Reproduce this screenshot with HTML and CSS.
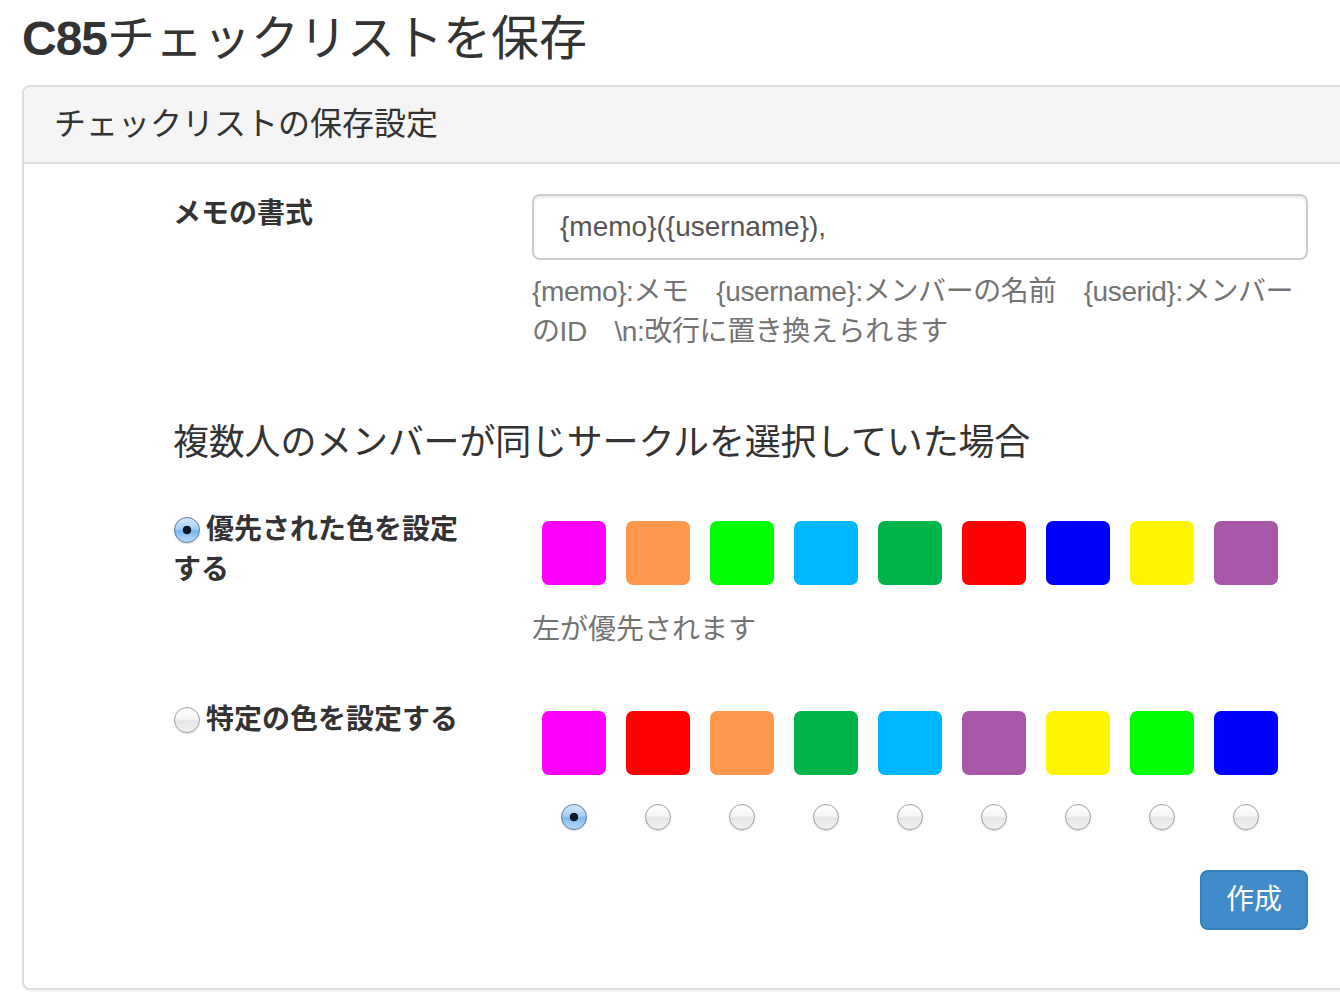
FILE: index.html
```html
<!DOCTYPE html>
<html lang="ja">
<head>
<meta charset="utf-8">
<title>C85チェックリストを保存</title>
<link rel="stylesheet" href="styles.css">
</head>
<body>
<div class="page">
  <h1 class="title"><span class="title-latin">C85</span>チェックリストを保存</h1>
  <div class="panel">
    <div class="panel-heading">
      <h3 class="panel-title">チェックリストの保存設定</h3>
    </div>
    <div class="panel-body">
      <form class="form">
        <div class="row row-memo">
          <label class="lbl">メモの書式</label>
          <div class="field">
            <input class="input" type="text" value="{memo}({username}),">
            <p class="help help-memo">{memo}:メモ　{username}:メンバーの名前　{userid}:メンバーのID　\n:改行に置き換えられます</p>
          </div>
        </div>

        <h4 class="section">複数人のメンバーが同じサークルを選択していた場合</h4>

        <div class="row row-priority">
          <label class="lbl radio-lbl"><input class="radio" type="radio" name="mode" checked><span>優先された色を設定する</span></label>
          <div class="field">
            <div class="swatches">
              <span class="swatch c-magenta"></span>
              <span class="swatch c-orange"></span>
              <span class="swatch c-lime"></span>
              <span class="swatch c-cyan"></span>
              <span class="swatch c-green"></span>
              <span class="swatch c-red"></span>
              <span class="swatch c-blue"></span>
              <span class="swatch c-yellow"></span>
              <span class="swatch c-purple"></span>
            </div>
            <p class="help help-priority">左が優先されます</p>
          </div>
        </div>

        <div class="row row-fixed">
          <label class="lbl radio-lbl"><input class="radio" type="radio" name="mode"><span>特定の色を設定する</span></label>
          <div class="field">
            <div class="swatches">
              <label class="pick"><span class="swatch c-magenta"></span><input class="radio" type="radio" name="color" checked></label>
              <label class="pick"><span class="swatch c-red"></span><input class="radio" type="radio" name="color"></label>
              <label class="pick"><span class="swatch c-orange"></span><input class="radio" type="radio" name="color"></label>
              <label class="pick"><span class="swatch c-green"></span><input class="radio" type="radio" name="color"></label>
              <label class="pick"><span class="swatch c-cyan"></span><input class="radio" type="radio" name="color"></label>
              <label class="pick"><span class="swatch c-purple"></span><input class="radio" type="radio" name="color"></label>
              <label class="pick"><span class="swatch c-yellow"></span><input class="radio" type="radio" name="color"></label>
              <label class="pick"><span class="swatch c-lime"></span><input class="radio" type="radio" name="color"></label>
              <label class="pick"><span class="swatch c-blue"></span><input class="radio" type="radio" name="color"></label>
            </div>
          </div>
        </div>

        <div class="actions">
          <button class="btn" type="button">作成</button>
        </div>
      </form>
    </div>
  </div>
</div>
</body>
</html>
```

FILE: styles.css
```css
html, body {
  margin: 0;
  padding: 0;
  background: #fff;
}
body {
  width: 1340px;
  height: 1008px;
  overflow: hidden;
  font-family: "Liberation Sans", "Noto Sans CJK JP", sans-serif;
  color: #333;
  font-size: 28px;
  line-height: 40px;
}
.page {
  padding-left: 22px;
  width: 1400px;
}
.title {
  margin: 12px 0 20px;
  font-size: 48px;
  line-height: 53px;
  font-weight: 400;
  color: #333;
  letter-spacing: 0;
}
.title-latin {
  font-weight: 700;
  letter-spacing: -1px;
}
.panel {
  width: 1340px;
  border: 2px solid #dddddd;
  border-radius: 8px;
  background: #fff;
  box-shadow: 0 2px 2px rgba(0, 0, 0, 0.05);
}
.panel-heading {
  background: #f5f5f5;
  border-bottom: 2px solid #dddddd;
  border-radius: 6px 6px 0 0;
  padding: 20px 30px;
}
.panel-title {
  margin: 0;
  font-size: 32px;
  line-height: 35px;
  font-weight: 400;
  color: #333;
}
.panel-body {
  padding: 30px 0 58px 0;
}
.form {
  margin-left: 149px;
  width: 1135px;
}
.row {
  display: grid;
  grid-template-columns: 300px 776px;
  column-gap: 59px;
  align-items: start;
}
.lbl {
  font-weight: 700;
  line-height: 40px;
  color: #333;
}
.radio-lbl {
  display: block;
}
.radio-lbl .radio {
  margin: 0 6px 0 1px;
  vertical-align: -4px;
}
.input {
  display: block;
  box-sizing: border-box;
  width: 776px;
  height: 66px;
  margin: 0;
  padding: 12px 26px;
  border: 2px solid #cccccc;
  border-radius: 8px;
  font-family: "Liberation Sans", "Noto Sans CJK JP", sans-serif;
  font-size: 28px;
  color: #555;
  background: #fff;
  box-shadow: inset 0 2px 2px rgba(0, 0, 0, 0.075);
  outline: none;
}
.help {
  margin: 12px 0 0;
  color: #737373;
  line-height: 40px;
}
.help-memo {
  letter-spacing: -0.4px;
}
.section {
  margin: 71px 0 47px;
  font-size: 36px;
  line-height: 40px;
  font-weight: 400;
  color: #333;
  letter-spacing: -0.2px;
}
.swatches {
  display: flex;
  gap: 20px;
  padding: 11px 0 0 10px;
}
.swatch {
  display: block;
  width: 64px;
  height: 64px;
  border-radius: 7px;
}
.help-priority {
  margin-top: 25px;
}
.row-fixed {
  margin-top: 50px;
}
.pick {
  display: flex;
  flex-direction: column;
  align-items: center;
  width: 64px;
}
.pick .radio {
  margin-top: 29px;
}
.c-magenta { background: #ff00ff; }
.c-orange { background: #ff974c; }
.c-lime { background: #00ff00; }
.c-cyan { background: #00b6ff; }
.c-green { background: #00b44c; }
.c-red { background: #ff0000; }
.c-blue { background: #0000ff; }
.c-yellow { background: #fff500; }
.c-purple { background: #a758a8; }

.radio {
  -webkit-appearance: none;
  appearance: none;
  box-sizing: border-box;
  width: 26px;
  height: 26px;
  margin: 0;
  border-radius: 50%;
  border: 1.5px solid #a0a0a0;
  background: linear-gradient(#ffffff 0%, #f6f6f6 45%, #e6e6e6 55%, #f2f2f2 100%);
  box-shadow: 0 1px 1px rgba(0, 0, 0, 0.15);
  position: relative;
  flex: none;
}
.radio:checked {
  border-color: #5b7aa3;
  background: radial-gradient(circle at 50% 50%, #0c1a2c 0, #0c1a2c 4px, transparent 4.6px),
              linear-gradient(#d4e9fc 0%, #a8d0f6 45%, #7bb7ef 55%, #b9ddfb 100%);
}
.actions {
  display: flex;
  justify-content: flex-end;
  margin-top: 40px;
}
.btn {
  height: 60px;
  padding: 0 24px;
  border: 2px solid #357ebd;
  border-radius: 8px;
  background: #428bca;
  color: #fff;
  font-family: "Liberation Sans", "Noto Sans CJK JP", sans-serif;
  font-size: 28px;
  line-height: 56px;
  cursor: pointer;
}
```
